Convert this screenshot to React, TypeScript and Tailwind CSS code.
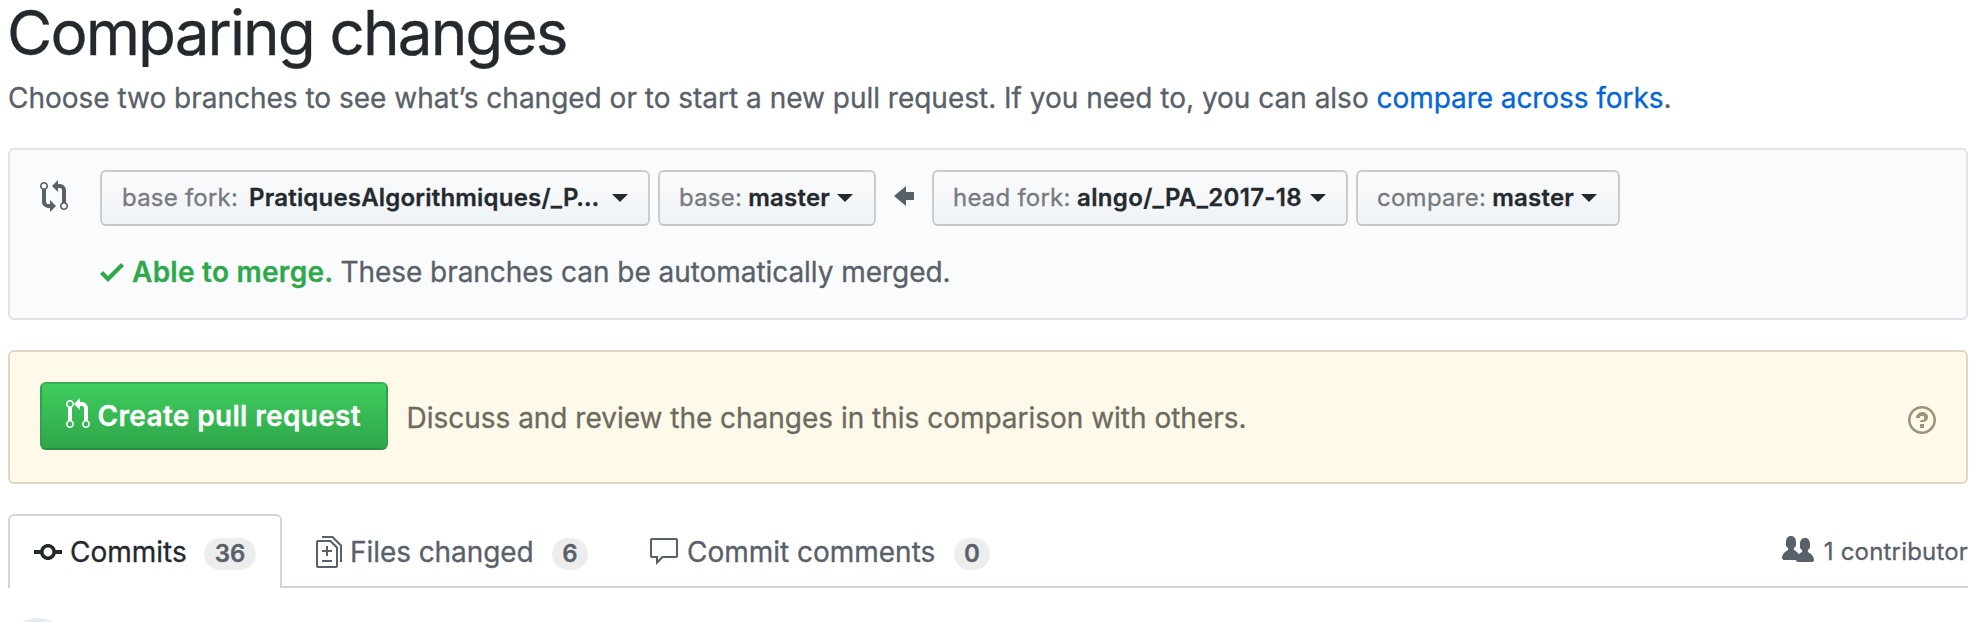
import React from "react";

const paths = {
  compare:
    "M5 12H4c-.27-.02-.48-.11-.69-.31-.21-.2-.3-.42-.31-.69V4.72A1.993 1.993 0 0 0 2 1a1.993 1.993 0 0 0-1 3.72V11c.03.78.34 1.47.94 2.06.6.59 1.28.91 2.06.94h1v2l3-3-3-3v2zM2 1.8c.66 0 1.2.55 1.2 1.2 0 .65-.55 1.2-1.2 1.2C1.35 4.2.8 3.65.8 3c0-.65.55-1.2 1.2-1.2zm11 9.48V5c-.03-.78-.34-1.47-.94-2.06-.6-.59-1.28-.91-2.06-.94H9V0L6 3l3 3V4h1c.27.02.48.11.69.31.21.2.3.42.31.69v6.28A1.993 1.993 0 0 0 12 15a1.993 1.993 0 0 0 1-3.72zm-1 2.92c-.66 0-1.2-.55-1.2-1.2 0-.65.55-1.2 1.2-1.2.65 0 1.2.55 1.2 1.2 0 .65-.55 1.2-1.2 1.2z",
  pullRequest:
    "M11 11.28V5c-.03-.78-.34-1.47-.94-2.06C9.46 2.35 8.78 2.03 8 2H7V0L4 3l3 3V4h1c.27.02.48.11.69.31.21.2.3.42.31.69v6.28A1.993 1.993 0 0 0 10 15a1.993 1.993 0 0 0 1-3.72zm-1 2.92c-.66 0-1.2-.55-1.2-1.2 0-.65.55-1.2 1.2-1.2.65 0 1.2.55 1.2 1.2 0 .65-.55 1.2-1.2 1.2zM4 3c0-1.11-.89-2-2-2a1.993 1.993 0 0 0-1 3.72v6.56A1.993 1.993 0 0 0 2 15a1.993 1.993 0 0 0 1-3.72V4.72c.59-.34 1-.98 1-1.72zm-.8 10c0 .66-.55 1.2-1.2 1.2-.65 0-1.2-.55-1.2-1.2 0-.65.55-1.2 1.2-1.2.65 0 1.2.55 1.2 1.2zM2 4.2C1.34 4.2.8 3.65.8 3c0-.65.55-1.2 1.2-1.2.65 0 1.2.55 1.2 1.2 0 .65-.55 1.2-1.2 1.2z",
  arrowLeft: "M6 3L0 8l6 5v-3h4V6H6V3z",
  check: "M12 5l-8 8-4-4 1.5-1.5L4 10l6.5-6.5L12 5z",
  commit:
    "M10.86 7c-.45-1.72-2-3-3.86-3-1.86 0-3.41 1.28-3.86 3H0v2h3.14c.45 1.72 2 3 3.86 3 1.86 0 3.41-1.28 3.86-3H14V7h-3.14zM7 10.2c-1.22 0-2.2-.98-2.2-2.2 0-1.22.98-2.2 2.2-2.2 1.22 0 2.2.98 2.2 2.2 0 1.22-.98 2.2-2.2 2.2z",
  diff: "M6 7h2v1H6v2H5V8H3V7h2V5h1v2zm-3 6h5v-1H3v1zM7.5 2L11 5.5V15c0 .55-.45 1-1 1H1c-.55 0-1-.45-1-1V3c0-.55.45-1 1-1h6.5zM10 6L7 3H1v12h9V6zM8.5 0H3v1h5l4 4v8h1V4.5L8.5 0z",
  comment:
    "M14 1H2c-.55 0-1 .45-1 1v8c0 .55.45 1 1 1h2v3.5L7.5 11H14c.55 0 1-.45 1-1V2c0-.55-.45-1-1-1zm0 9H7l-2 2v-2H2V2h12v8z",
  question:
    "M6 10h2v2H6v-2zm4-3.5C10 8.64 8 9 8 9H6c0-.55.45-1 1-1h.5c.28 0 .5-.22.5-.5v-1c0-.28-.22-.5-.5-.5h-1c-.28 0-.5.22-.5.5V7H4c0-1.5 1.5-3 3-3s3 1 3 2.5zM7 2.3c3.14 0 5.7 2.56 5.7 5.7s-2.56 5.7-5.7 5.7A5.71 5.71 0 0 1 1.3 8c0-3.14 2.56-5.7 5.7-5.7zM7 1C3.14 1 0 4.14 0 8s3.14 7 7 7 7-3.14 7-7-3.14-7-7-7z",
  people:
    "M16 12.999c0 .439-.45 1-1 1H7.995c-.539 0-.994-.447-.995-.999H1c-.54 0-1-.561-1-1 0-2.634 3-4 3-4s.229-.409 0-1c-.841-.621-1.058-.59-1-3 .058-2.419 1.367-3 2.5-3s2.442.58 2.5 3c.058 2.41-.159 2.379-1 3-.229.59 0 1 0 1s1.549.711 2.42 2.088C9.196 9.369 10 8.999 10 8.999s.229-.409 0-1c-.841-.62-1.058-.59-1-3 .058-2.419 1.367-3 2.5-3s2.437.581 2.495 3c.059 2.41-.158 2.38-1 3-.229.59 0 1 0 1s3.005 1.366 3.005 4",
};

function Icon({ name, width, className = "" }: { name: keyof typeof paths; width: number; className?: string }) {
  return (
    <svg
      viewBox={`0 0 ${width} 16`}
      width={width * 2}
      height={32}
      fill="currentColor"
      fillRule="evenodd"
      className={`shrink-0 ${className}`}
    >
      <path d={paths[name]} />
    </svg>
  );
}

function Caret({ className }: { className: string }) {
  return (
    <span
      className={`h-0 w-0 shrink-0 border-x-8 border-t-8 border-x-transparent border-t-[#24292e] ${className}`}
    />
  );
}

const branchButton =
  "flex h-14 shrink-0 items-center rounded-[6px] border-2 border-[#c9cccf] border-b-[#c2c5c9] bg-gradient-to-b from-[#fafbfc] to-[#eff3f6] bg-origin-border text-[24px] leading-[30px] text-[#24292e]";
const label = "text-[#777a7d]";
const counter =
  "mt-1 flex h-8 items-center justify-center rounded-full bg-[#ededee] text-[24px] font-semibold leading-8 text-[#586069]";

export default function App() {
  return (
    <div className="h-[622px] w-[1982px] overflow-hidden whitespace-nowrap bg-white pl-2 pr-3.5 font-['Inter',sans-serif] text-[28px] text-[#586069] [-webkit-text-stroke:0.3px]">
      <h1 className="-ml-px h-[66px] text-[62px] font-normal leading-[66px] tracking-[-1.91px] text-[#24292e]">
        Comparing changes
      </h1>
      <p className="h-16 leading-[64px] tracking-[-0.01px]">
        Choose two branches to see what’s changed or to start a new pull request. If you need to, you can also{" "}
        <a className="tracking-[-0.065px] text-[#0366d6]">compare across forks</a>.
      </p>

      <section className="mt-[18px] h-[172px] rounded-[6px] border-2 border-[#e1e4e8] bg-[#fafbfc] pl-[30px] pt-5">
        <div className="flex h-14 items-center">
          <Icon name="compare" width={14} className="mb-1" />
          <button className={`${branchButton} ml-8 w-[550px] pl-[20px]`}>
            <span className={`${label} tracking-[0.22px]`}>base fork:</span>
            <span className="ml-[11px] font-semibold tracking-[0.19px]">PratiquesAlgorithmiques/_P…</span>
            <Caret className="ml-[13px]" />
          </button>
          <button className={`${branchButton} ml-2 w-[218px] pl-[19px]`}>
            <span className={`${label} tracking-[0.23px]`}>base:</span>
            <span className="ml-[6px] font-semibold tracking-[0.24px]">master</span>
            <Caret className="ml-[7px]" />
          </button>
          <Icon name="arrowLeft" width={10} className="mx-[18px] mb-1" />
          <button className={`${branchButton} w-[416px] pl-[19px]`}>
            <span className={`${label} tracking-[0.22px]`}>head fork:</span>
            <span className="ml-[6.5px] font-semibold tracking-[0.33px]">alngo/_PA_2017-18</span>
            <Caret className="ml-[8px]" />
          </button>
          <button className={`${branchButton} ml-2 w-[264px] pl-[19px]`}>
            <span className={`${label} tracking-[0.26px]`}>compare:</span>
            <span className="ml-[6px] font-semibold tracking-[0.24px]">master</span>
            <Caret className="ml-[7px]" />
          </button>
        </div>
        <div className="ml-[60px] mt-[26px] flex h-10 items-center leading-10">
          <Icon name="check" width={12} className="text-[#2fa84c]" />
          <span className="ml-[8px] font-semibold tracking-[0.26px] text-[#2fa84c]">Able to merge.</span>
          <span className="ml-[7px] tracking-[-0.05px]">These branches can be automatically merged.</span>
        </div>
      </section>

      <section className="mt-[30px] flex h-[134px] rounded-[6px] border-2 border-[#dfd8c2] bg-[#fff9ea] px-[30px] pt-[30px] text-[#6c6a5f]">
        <button className="flex h-[68px] w-[348px] shrink-0 items-center rounded-[6px] border-2 border-[#31a24c] border-b-[#2a8d42] border-t-[#36b053] bg-gradient-to-b from-[#3fce5f] to-[#2fa549] bg-origin-border pl-6 font-semibold leading-10 text-white">
          <Icon name="pullRequest" width={12} className="mb-1" />
          <span className="ml-[7.5px] tracking-[0.34px]">Create pull request</span>
        </button>
        <span className="ml-[18.5px] leading-[72px] tracking-[-0.015px]">
          Discuss and review the changes in this comparison with others.
        </span>
        <Icon name="question" width={14} className="ml-auto mt-[22px] text-[#9c9679]" />
      </section>

      <nav className="mt-[30px] flex h-[74px] items-stretch">
        <div className="flex w-[274px] shrink-0 items-center rounded-t-[6px] border-2 border-b-0 border-[#d1d5da] pl-6 text-[#24292e]">
          <Icon name="commit" width={14} />
          <span className="ml-2 w-[117px] leading-10">Commits</span>
          <span className={`${counter} ml-[17px] w-[52px]`}>36</span>
        </div>
        <div className="flex flex-1 items-center border-b-2 border-[#d1d5da] pl-[34px] pt-1">
          <Icon name="diff" width={13} />
          <span className="ml-[8px] w-[184px] leading-10 tracking-[-0.07px]">Files changed</span>
          <span className={`${counter} ml-[18px] w-9`}>6</span>
          <Icon name="comment" width={16} className="ml-[60px]" />
          <span className="ml-[7px] w-[249px] leading-10 tracking-[-0.015px]">Commit comments</span>
          <span className={`${counter} ml-[18px] w-9`}>0</span>
          <Icon name="people" width={16} className="mb-1 ml-auto" />
          <span className="ml-[9.5px] text-[24px] leading-10 tracking-[0.187px]">1 contributor</span>
        </div>
      </nav>

      <div className="h-[34px] overflow-hidden pt-[30px]">
        <div className="h-[60px] w-[60px] rounded-full bg-[#e6ebf1]" />
      </div>
    </div>
  );
}
